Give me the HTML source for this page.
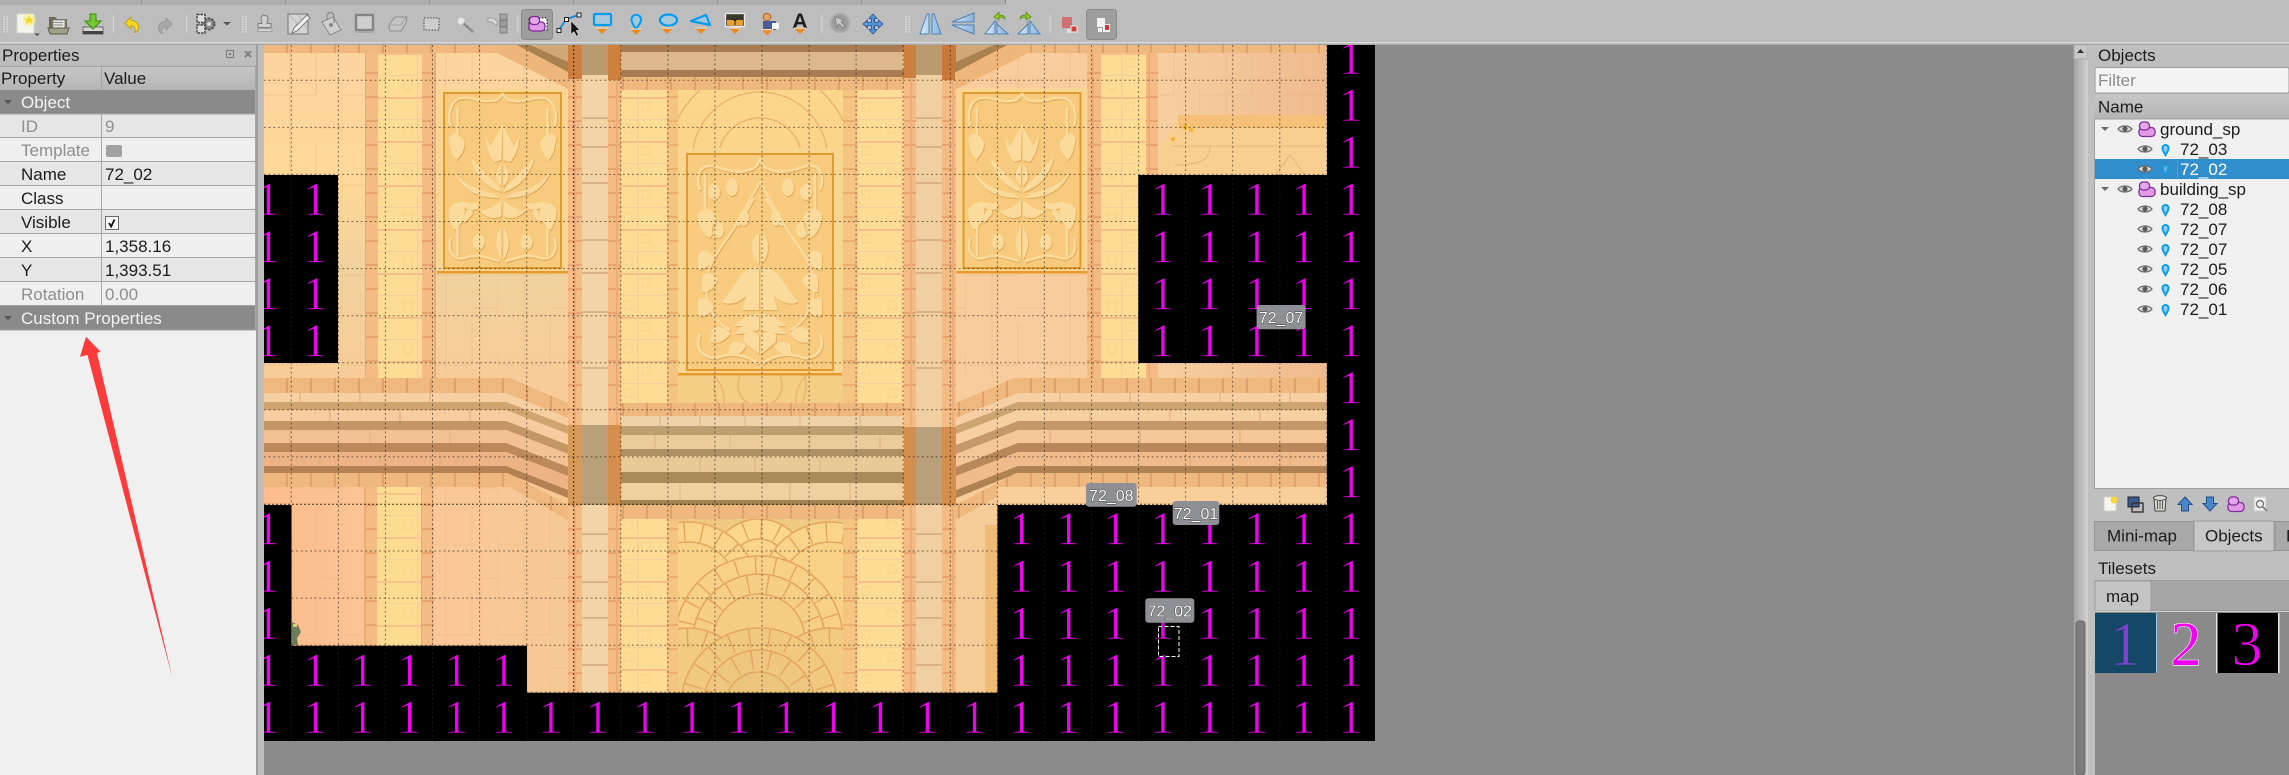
<!DOCTYPE html>
<html><head><meta charset="utf-8"><style>
html,body{margin:0;padding:0;background:#8c8c8c;width:2289px;height:775px;overflow:hidden}
svg{display:block}
.ui{font-family:"Liberation Sans",sans-serif;font-size:16.5px;fill:#1c1c1c}
.dis{fill:#8e8e8e}.wh{fill:#f4f4f4}
.one{font-family:"Liberation Serif",serif;font-size:48px;fill:#f000f0;text-anchor:middle;stroke:#000;stroke-width:.7px}
.bd{font-family:"Liberation Sans",sans-serif;font-size:16px;fill:#fff;text-anchor:middle;paint-order:stroke;stroke:#222;stroke-width:.7px}
</style></head><body>
<svg width="2289" height="775" viewBox="0 0 2289 775" xmlns="http://www.w3.org/2000/svg">
<defs>
<pattern id="win" width="44" height="44" patternUnits="userSpaceOnUse" y="53"><rect width="44" height="44" fill="#fddc94"/><rect y="0" width="44" height="2" fill="#f6bc8c"/><rect y="22" width="44" height="1" fill="#f8cc9c"/><rect x="21" width="1.5" height="44" fill="#f8cc9c"/><path d="M8 28h8v8h-8zM26 6h8v8h-8z" fill="none" stroke="#f8d290"/></pattern>
<pattern id="brk" width="14" height="24" patternUnits="userSpaceOnUse" y="50"><rect width="14" height="24" fill="#f4bc84"/><rect y="22" width="14" height="2" fill="#e8a470"/><rect x="0" width="2" height="24" fill="#ecac76"/></pattern>
<pattern id="brk2" width="14" height="24" patternUnits="userSpaceOnUse" y="50"><rect width="14" height="24" fill="#f5c480"/><rect y="22" width="14" height="2" fill="#ecae6c"/></pattern>
<pattern id="tile" width="24" height="15" patternUnits="userSpaceOnUse"><rect width="24" height="15" fill="#efb87e"/><rect x="22" width="2" height="15" fill="#e0a06c"/></pattern>
<pattern id="wall" width="78" height="90" patternUnits="userSpaceOnUse" x="264" y="53"><path d="M26 0V90M52 0V42M78 30V90M0 42H52M52 75H78" stroke="#e6b484" stroke-opacity=".45" fill="none"/></pattern>
<linearGradient id="wl" x1="0" x2="0" y1="0" y2="1"><stop offset="0" stop-color="#fcd3a0"/><stop offset=".3" stop-color="#fed898"/><stop offset=".5" stop-color="#f0d29c"/><stop offset=".75" stop-color="#f8cc98"/><stop offset="1" stop-color="#fcc898"/></linearGradient>
<linearGradient id="wl2" x1="0" x2="1" y1="0" y2="0"><stop offset="0" stop-color="#fdbc8c"/><stop offset=".5" stop-color="#fbc898"/><stop offset="1" stop-color="#f6c894"/></linearGradient>
<linearGradient id="wr" x1="0" x2="1" y1="0" y2="0"><stop offset="0" stop-color="#f6cfa0"/><stop offset="1" stop-color="#efba8e"/></linearGradient>
<linearGradient id="arc" x1="0" x2="0" y1="0" y2="1"><stop offset="0" stop-color="#fcd68c"/><stop offset="1" stop-color="#ecc67e"/></linearGradient>
<linearGradient id="hd" x1="0" x2="0" y1="0" y2="1"><stop offset="0" stop-color="#c6c6c6"/><stop offset="1" stop-color="#b4b4b4"/></linearGradient>
<linearGradient id="sb" x1="0" x2="1" y1="0" y2="0"><stop offset="0" stop-color="#a4a4a4"/><stop offset="1" stop-color="#d2d2d2"/></linearGradient>
<linearGradient id="fl" x1="0" x2="1" y1="0" y2="0"><stop offset="0" stop-color="#d7e8f8"/><stop offset="1" stop-color="#8ab4dc"/></linearGradient>
<clipPath id="mc"><rect x="264" y="45" width="1111" height="696"/></clipPath>
<clipPath id="ca"><rect x="678" y="88" width="165" height="60"/><rect x="678" y="375" width="165" height="28"/></clipPath>
<clipPath id="cb"><rect x="678" y="519" width="165" height="174"/></clipPath>
<clipPath id="bk"><path id="blk" d="M264 175H338V363H264ZM1138.3 175H1327V363H1138.3ZM1327 45H1375V741H264V505H291.5V645.7H527V692.7H997.5V505H1327Z"/></clipPath>
<g id="orn">
 <path d="M-52 38C-56 24-50 10-40 10C-30 8-22 16-6 12C-3 10-1 8 0 5M-45 20V62M-52 150C-56 165-48 172-38 170C-25 165-15 170-3 173M-45 168V125" fill="none" stroke="currentColor" stroke-width="2.6"/>
 <path d="M-54 50C-48 42-44 46-39 52C-36 58-40 66-46 72C-52 66-52 58-54 50ZM-54 122C-48 112-42 114-38 120C-36 128-42 138-48 142C-52 136-54 130-54 122Z" fill="currentColor"/>
 <path d="M0 36C-5 46-8 52-12 58L-17 48C-16 60-14 66-8 74L-1 72ZM-1 76C-8 84-8 92-1 98ZM-4 98C-18 86-28 72-32 70C-27 88-16 100-1 104ZM-10 105C-30 102-42 92-48 84C-40 102-26 110-3 110ZM-1 113C-9 118-16 124-24 122C-16 130-8 132-1 128ZM-24 114C-32 118-38 112-44 114C-38 122-30 124-24 120ZM-1 138C-7 150-9 156-1 172ZM-30 126C-34 130-36 136-40 134C-38 124-34 120-30 122Z" fill="currentColor"/>
 <path d="M-24 146a6 8 0 1 0 .1 0Z" fill="currentColor"/>
</g>
<g id="pan"><rect x="-65.5" y="0" width="131" height="185" fill="#f8d592"/><rect x="-58.5" y="5" width="117" height="175" fill="#f7ca7e" stroke="#e09a2e" stroke-width="2"/><rect x="-65.5" y="183" width="131" height="2.5" fill="#e69a2c"/>
<g color="#e2ae60" transform="translate(.8 1.2)"><use href="#orn"/><use href="#orn" transform="scale(-1,1)"/></g><g color="#fadb9c"><use href="#orn"/><use href="#orn" transform="scale(-1,1)"/></g></g>
<g id="ocen">
 <path d="M-60 36C-66 18-58 10-46 12C-30 18-18 20-6 14C-3 12-1 8 0 4M-55 20V70M-60 180C-66 196-56 204-44 204C-30 198-14 200-2 210" fill="none" stroke="currentColor" stroke-width="2.8"/>
 <path d="M-62 60C-54 50-48 56-44 62C-42 72-46 78-50 84C-56 82-62 72-62 60ZM-46 30a6 8 0 1 0 .1 0ZM-28 24a6 9 0 1 0 .1 0ZM-16 56a5 8 0 1 0 .1 0ZM-42 68a6 8 0 1 0 .1 0ZM-62 100C-54 94-50 98-46 104C-50 112-56 116-62 116ZM-58 122C-50 116-46 120-42 126C-46 134-50 138-58 138ZM-62 145C-52 142-48 148-46 154C-50 160-56 164-62 162ZM-48 176C-40 170-34 174-30 180C-36 188-42 190-50 188ZM-16 180C-8 176-4 178-1 182V200C-6 196-12 192-16 188ZM-30 190C-24 186-18 188-14 192C-18 200-24 202-32 200Z" fill="currentColor"/>
 <path d="M0 28L-26 74M-26 74C-36 90-46 100-52 118C-58 140-50 166-30 176M-6 44L-22 72" fill="none" stroke="currentColor" stroke-width="2.4"/>
 <path d="M-1 80C-6 80-9 88-8 96C-7 104-4 108-1 110ZM-1 114C-10 112-18 118-22 126L-38 148C-30 152-20 148-14 142L-18 156H-1ZM-1 160C-12 160-20 166-26 172L-18 172L-26 180C-16 180-8 178-1 176Z" fill="currentColor"/>
</g>
<g id="pc"><rect x="-82" y="-6" width="164" height="227" fill="#f9d592"/><rect x="-73" y="0" width="146" height="216" fill="#f8cb7e" stroke="#e09a2e" stroke-width="2"/><rect x="-82" y="219" width="164" height="2.5" fill="#e69a2c"/>
<g color="#e2ae60" transform="translate(.8 1.2)"><use href="#ocen"/><use href="#ocen" transform="scale(-1,1)"/></g><g color="#fadb9c"><use href="#ocen"/><use href="#ocen" transform="scale(-1,1)"/></g></g>
<g id="eye"><path d="M0 5C3 1 11 1 14 5C11 9 3 9 0 5Z" fill="#dcdcdc" stroke="#6a6a6a" stroke-width="1.3"/><circle cx="7" cy="5" r="2.6" fill="#5a5a5a"/></g>
<g id="lay"><rect x="1" y="6.5" width="16" height="9" rx="3.5" fill="#e29ae6" stroke="#7c2c9c" stroke-width="1.3"/><rect x="1.5" y="1" width="10" height="8" rx="3.5" fill="#e6a6ea" stroke="#7c2c9c" stroke-width="1.3"/></g>
<g id="pin"><path d="M4.5 12C2.8 9 1.5 7.5 1.5 5A3 3 0 0 1 7.5 5C7.5 7.5 6.2 9 4.5 12Z" fill="#8fd0f0" stroke="#0a9cec" stroke-width="2"/></g>
<g id="tri"><path d="M-5 0H5L0 5Z" fill="#f08a1e"/><path d="M-6-1H6" stroke="#f6d8a8" stroke-width="1"/></g>
<g id="dots"><path d="M0 0V17M3 0V17" stroke="#d6d6d6" stroke-width="2" stroke-dasharray="1.5 1"/></g>
</defs>

<rect width="2289" height="775" fill="#8c8c8c"/>

<!-- MAP -->
<g clip-path="url(#mc)">
<rect x="264" y="45" width="310" height="448" fill="url(#wl)"/>
<rect x="264" y="487" width="304" height="206" fill="url(#wl2)"/>
<rect x="264" y="53" width="101" height="320" fill="url(#wall)"/>
<rect x="436" y="53" width="132" height="320" fill="url(#wall)"/>
<rect x="291" y="487" width="277" height="206" fill="url(#wall)"/>
<rect x="365" y="53" width="13" height="325" fill="url(#brk)"/><rect x="378" y="53" width="44" height="325" fill="url(#win)"/><rect x="422" y="53" width="14" height="325" fill="url(#brk)"/>
<rect x="364" y="487" width="13" height="160" fill="url(#brk)"/><rect x="377" y="487" width="44" height="160" fill="#fddc8c"/><rect x="377" y="487" width="44" height="160" fill="url(#win)" opacity=".8"/><rect x="421" y="487" width="13" height="160" fill="url(#brk)"/>
<rect x="568" y="45" width="14" height="648" fill="url(#brk)"/>
<rect x="582" y="45" width="26" height="648" fill="#f2d4a6"/>
<path d="M582 118H608M582 147H608M582 183H608M582 240H608M582 273H608M582 312H608M582 368H608M582 534H608M582 582H608M582 618H608M582 665H608" stroke="#cfa87a" stroke-width="1.4"/>
<rect x="608" y="45" width="13" height="648" fill="url(#brk)"/>
<rect x="621" y="88" width="46" height="605" fill="url(#win)"/>
<rect x="667" y="88" width="11" height="605" fill="url(#brk2)"/>
<rect x="678" y="88" width="165" height="605" fill="url(#arc)"/>
<rect x="843" y="88" width="14" height="605" fill="url(#brk2)"/>
<rect x="857" y="88" width="47" height="605" fill="url(#win)"/>
<rect x="904" y="45" width="12" height="648" fill="url(#brk)"/>
<rect x="916" y="45" width="26" height="648" fill="#f0d0a2"/>
<path d="M916 118H942M916 147H942M916 183H942M916 240H942M916 273H942M916 312H942M916 368H942M916 534H942M916 582H942M916 618H942M916 665H942" stroke="#cfa87a" stroke-width="1.4"/>
<rect x="942" y="45" width="14" height="648" fill="url(#brk)"/>
<rect x="956" y="53" width="372" height="452" fill="#f8cc9c"/><rect x="956" y="53" width="131" height="325" fill="url(#wall)"/>
<rect x="1087" y="53" width="14" height="325" fill="url(#brk)"/><rect x="1101" y="53" width="45" height="325" fill="url(#win)"/><rect x="1146" y="53" width="12" height="325" fill="url(#brk)"/>
<rect x="1158" y="53" width="170" height="325" fill="url(#wr)"/><rect x="1158" y="53" width="170" height="70" fill="url(#wall)"/>
<rect x="956" y="487" width="42" height="206" fill="#f6cc98"/><rect x="985" y="525" width="13" height="170" fill="#f0bc74"/>
<!-- arcs -->
<g clip-path="url(#ca)" fill="none" stroke="#eab46c" stroke-width="1.4">
<circle cx="760" cy="160" r="42"/><circle cx="760" cy="160" r="68"/><circle cx="760" cy="160" r="92"/>
<circle cx="760" cy="385" r="22"/><circle cx="760" cy="385" r="46"/><circle cx="690" cy="400" r="34"/><circle cx="830" cy="400" r="34"/>
</g>
<g clip-path="url(#cb)" stroke="#e4a65e" stroke-width="1.5">
<circle cx="759" cy="567" r="48" fill="#fcd88e"/><circle cx="759" cy="567" r="38" fill="none" stroke-width="18" stroke-dasharray="1.4 15"/><circle cx="759" cy="567" r="28" fill="#fad48a"/>
<circle cx="688" cy="592" r="70" fill="#fad48a"/><circle cx="688" cy="592" r="60" fill="none" stroke-width="18" stroke-dasharray="1.4 16"/><circle cx="688" cy="592" r="50" fill="#f9d288"/>
<circle cx="830" cy="592" r="70" fill="#fad48a"/><circle cx="830" cy="592" r="60" fill="none" stroke-width="18" stroke-dasharray="1.4 16"/><circle cx="830" cy="592" r="50" fill="#f9d288"/>
<circle cx="759" cy="640" r="84" fill="#f8d088"/><circle cx="759" cy="640" r="75" fill="none" stroke-width="16" stroke-dasharray="1.4 18"/><circle cx="759" cy="640" r="66" fill="#f6ce86"/><circle cx="759" cy="640" r="56" fill="none" stroke-width="18" stroke-dasharray="1.4 18"/><circle cx="759" cy="640" r="46" fill="#f5cc84"/>
<circle cx="688" cy="690" r="62" fill="#f2ca82"/><circle cx="688" cy="690" r="52" fill="none" stroke-width="18" stroke-dasharray="1.4 16"/>
<circle cx="830" cy="690" r="62" fill="#f2ca82"/><circle cx="830" cy="690" r="52" fill="none" stroke-width="18" stroke-dasharray="1.4 16"/>
<circle cx="759" cy="706" r="78" fill="#f0c880"/><circle cx="759" cy="706" r="68" fill="none" stroke-width="18" stroke-dasharray="1.4 18"/><circle cx="759" cy="706" r="56" fill="#efc680"/><circle cx="759" cy="706" r="46" fill="none" stroke-width="18" stroke-dasharray="1.4 16"/><circle cx="759" cy="706" r="34" fill="#edc47e"/>
</g>
<use href="#pan" x="502.5" y="88"/><use href="#pan" x="1022" y="88"/>
<use href="#pc" x="760" y="154"/>
<!-- roof top -->
<rect x="264" y="45" width="240" height="8" fill="url(#tile)"/>
<polygon points="497,45 517,45 570,72 570,90 497,53" fill="#efb67c"/>
<polygon points="517,45 568,45 568,72" fill="#a8814f"/>
<polygon points="530,45 568,45 568,62" fill="#d0a878"/>
<rect x="568" y="45" width="14" height="34" fill="#cc7f3e"/><rect x="608" y="45" width="13" height="35" fill="#cf803c"/><rect x="582" y="45" width="26" height="30" fill="#bb9a70"/>
<rect x="621" y="45" width="283" height="33" fill="#a87c50"/><rect x="621" y="52" width="283" height="18" fill="#dcb88c"/>
<rect x="621" y="77" width="283" height="13" fill="url(#tile)"/>
<rect x="904" y="45" width="12" height="33" fill="#cc7f3e"/><rect x="942" y="45" width="14" height="35" fill="#c87838"/><rect x="916" y="45" width="26" height="30" fill="#bb9a70"/>
<polygon points="1028,45 1007,45 955,72 955,90 1028,53" fill="#efb67c"/>
<polygon points="1007,45 956,45 956,72" fill="#a8814f"/>
<polygon points="994,45 956,45 956,62" fill="#d0a878"/>
<rect x="1028" y="45" width="300" height="8" fill="url(#tile)"/>
<path d="M1160 175V144C1170 135 1175 125 1178 115H1328V175Z" fill="#f8cf90"/><rect x="1178" y="115" width="150" height="13" fill="#f6c078"/><path d="M1172 146H1328M1210 146C1210 160 1200 165 1175 165M1275 175L1290 155L1305 175" fill="none" stroke="#e8b478"/>
<circle cx="1185" cy="127" r="2.5" fill="#f4b824"/><circle cx="1191" cy="130" r="2" fill="#f4b824"/><circle cx="1173" cy="139" r="2" fill="#f4b824"/>
<!-- centre bands -->
<rect x="621" y="403" width="283" height="14" fill="url(#tile)"/>
<rect x="621" y="416" width="283" height="10" fill="#eed2a8"/><rect x="621" y="426" width="283" height="9" fill="#bd9f70"/>
<rect x="621" y="435" width="283" height="14" fill="#ebcb9a"/><rect x="621" y="449" width="283" height="7" fill="#ad9064"/>
<rect x="621" y="456" width="283" height="16" fill="#e9c998"/><rect x="621" y="472" width="283" height="11" fill="#ab8a5a"/>
<rect x="621" y="483" width="283" height="17" fill="#f0cfa0"/><rect x="621" y="500" width="283" height="5" fill="#a58454"/>
<rect x="621" y="505" width="283" height="14" fill="url(#tile)"/>
<path d="M660 416V426M700 416V426M745 416V426M800 416V426M860 416V426M655 435V449M730 435V449M810 435V449M880 435V449M700 456V472M755 456V472M820 456V472M680 483V500M790 483V500M850 483V500" stroke="#d8b484"/>
<rect x="582" y="425" width="26" height="80" fill="#b9a07a"/><rect x="916" y="427" width="26" height="78" fill="#b9a07a"/>
<rect x="568" y="425" width="14" height="80" fill="#d89a58"/><rect x="608" y="425" width="13" height="80" fill="#d48e4e"/><rect x="904" y="427" width="12" height="78" fill="#d48e4e"/><rect x="942" y="427" width="14" height="78" fill="#d48e4e"/>
<!-- left slanted bands -->
<polygon points="264,378 510,378 568,403 568,430 506,393 264,393" fill="url(#tile)"/>
<polygon points="264,393 506,393 568,418 568,427 506,402 264,402" fill="#f6cfa2"/>
<polygon points="264,402 506,402 568,426 568,434 506,410 264,410" fill="#cfa46e"/>
<polygon points="264,410 506,410 568,434 568,445 506,421 264,421" fill="#f6cca0"/>
<polygon points="264,421 506,421 568,445 568,454 506,430 264,430" fill="#c49666"/>
<polygon points="264,430 506,430 568,454 568,467 506,443 264,443" fill="#f3c294"/>
<polygon points="264,443 506,443 568,467 568,476 506,452 264,452" fill="#bd885a"/>
<polygon points="264,452 506,452 568,476 568,490 506,466 264,466" fill="#eeb384"/>
<polygon points="264,466 506,466 568,490 568,498 506,473 264,473" fill="#b48252"/>
<polygon points="264,473 508,473 568,505 568,520 510,487 264,487" fill="url(#tile)"/>
<path d="M300 393V402M360 393V402M430 393V402M330 410V421M400 410V421M470 410V421M290 430V443M370 430V443M450 430V443M320 452V466M380 452V466M440 452V466" stroke="#e0aa78"/>
<!-- right slanted bands -->
<polygon points="1328,378 1014,378 956,403 956,430 1018,393 1328,393" fill="url(#tile)"/>
<polygon points="1328,393 1018,393 956,418 956,427 1018,402 1328,402" fill="#f6d0a4"/>
<polygon points="1328,402 1018,402 956,426 956,434 1018,410 1328,410" fill="#cca470"/>
<polygon points="1328,410 1018,410 956,434 956,445 1018,421 1328,421" fill="#f6cfa2"/>
<polygon points="1328,421 1018,421 956,445 956,454 1018,430 1328,430" fill="#c49868"/>
<polygon points="1328,430 1018,430 956,454 956,467 1018,443 1328,443" fill="#f4c698"/>
<polygon points="1328,443 1018,443 956,467 956,476 1018,452 1328,452" fill="#b8885a"/>
<polygon points="1328,452 1018,452 956,476 956,490 1018,466 1328,466" fill="#f0bb8a"/>
<polygon points="1328,466 1018,466 956,490 956,498 1018,473 1328,473" fill="#b08252"/>
<polygon points="1328,473 1016,473 956,505 956,520 1014,487 1328,487" fill="url(#tile)"/>
<path d="M1060 393V402M1130 393V402M1220 393V402M1290 393V402M1090 410V421M1170 410V421M1260 410V421M1050 430V443M1140 430V443M1240 430V443M1080 452V466M1190 452V466M1290 452V466" stroke="#e0aa78"/>
<rect x="997" y="487" width="331" height="18" fill="#f8cf98"/>
<path d="M292 622L298 625L301 632L297 638L298 645H292Z" fill="#6c7c58"/><path d="M293 624h4v3h-4z" fill="#e8d070"/>
<!-- grid -->
<g id="gd" stroke="#1c120a" stroke-width="1" stroke-dasharray="2 2.6" fill="none" opacity=".55">
<path d="M291.3 45V741M338.4 45V741M385.4 45V741M432.5 45V741M479.6 45V741M526.7 45V741M620.8 45V741M667.9 45V741M714.9 45V741M762 45V741M809.1 45V741M856.1 45V741M903.2 45V741M950.3 45V741M997.4 45V741M1044.4 45V741M1091.5 45V741M1138.6 45V741M1185.6 45V741M1232.7 45V741M1279.8 45V741M1326.8 45V741"/>
<path d="M264 80.3H1375M264 127.4H1375M264 174.4H1375M264 221.5H1375M264 268.6H1375M264 315.7H1375M264 362.7H1375M264 409.8H1375M264 456.9H1375M264 551H1375M264 598.1H1375M264 645.2H1375M264 692.2H1375"/>
</g>
<path d="M573.7 45V741M264 504.3H1375" stroke="#000" stroke-width="1" stroke-dasharray="2 2" opacity=".75"/>
<use href="#blk" fill="#000"/>
<g clip-path="url(#bk)"><path d="M291.3 45V741M338.4 45V741M385.4 45V741M432.5 45V741M479.6 45V741M526.7 45V741M573.7 45V741M620.8 45V741M667.9 45V741M714.9 45V741M762 45V741M809.1 45V741M856.1 45V741M903.2 45V741M950.3 45V741M997.4 45V741M1044.4 45V741M1091.5 45V741M1138.6 45V741M1185.6 45V741M1232.7 45V741M1279.8 45V741M1326.8 45V741" stroke="#161616" stroke-dasharray="2 2.6"/></g>
<g class="one">
<text y="74" x="1350.5">1</text>
<text y="121.1" x="1350.5">1</text>
<text y="168.1" x="1350.5">1</text>
<text y="215.2" x="267.8 314.9 1162.2 1209.2 1256.3 1303.4 1350.5">1111111</text>
<text y="262.3" x="267.8 314.9 1162.2 1209.2 1256.3 1303.4 1350.5">1111111</text>
<text y="309.4" x="267.8 314.9 1162.2 1209.2 1256.3 1303.4 1350.5">1111111</text>
<text y="356.4" x="267.8 314.9 1162.2 1209.2 1256.3 1303.4 1350.5">1111111</text>
<text y="403.5" x="1350.5">1</text>
<text y="450.6" x="1350.5">1</text>
<text y="497.6" x="1350.5">1</text>
<text y="544.7" x="267.8 1021 1068 1115 1162.2 1209.2 1256.3 1303.4 1350.5">111111111</text>
<text y="591.8" x="267.8 1021 1068 1115 1162.2 1209.2 1256.3 1303.4 1350.5">111111111</text>
<text y="638.8" x="267.8 1021 1068 1115 1162.2 1209.2 1256.3 1303.4 1350.5">111111111</text>
<text y="685.9" x="267.8 314.9 362 409 456 503.2 1021 1068 1115 1162.2 1209.2 1256.3 1303.4 1350.5">11111111111111</text>
<text y="733" x="267.8 314.9 362 409 456 503.2 550.2 597.3 644.4 691.4 738.5 785.6 832.7 879.7 926.8 973.9 1021 1068 1115 1162.2 1209.2 1256.3 1303.4 1350.5">111111111111111111111111</text>
</g>
<rect x="1256.6" y="305" width="49" height="24.3" rx="3" fill="#8f9096"/><text class="bd" x="1281" y="323">72_07</text>
<rect x="1086" y="483" width="50.7" height="23.7" rx="3" fill="#8f9096"/><text class="bd" x="1111.3" y="501">72_08</text>
<rect x="1172.7" y="501" width="46.6" height="24" rx="3" fill="#8f9096"/><text class="bd" x="1196" y="519">72_01</text>
<rect x="1145.3" y="598.3" width="49" height="24.4" rx="3" fill="#8f9096"/><text class="bd" x="1169.8" y="616.5">72_02</text>
<rect x="1158.5" y="626.5" width="20.5" height="30" fill="none" stroke="#000"/><rect x="1158.5" y="626.5" width="20.5" height="30" fill="none" stroke="#fff" stroke-dasharray="4 2"/>
</g>

<!-- TOOLBAR -->
<rect x="0" y="0" width="2289" height="43" fill="#bdbdbd"/>
<rect x="0" y="0" width="1005" height="4" fill="#b0b0b0"/><rect x="0" y="3.5" width="1005" height="1" fill="#a6a6a6"/>
<path d="M141.5 0V4M285.5 0V4M429.5 0V4M573.5 0V4M717.5 0V4M861.5 0V4M1005.5 0V4" stroke="#8e8e8e"/>
<rect x="0" y="42" width="2289" height="1.5" fill="#dadada"/><rect x="0" y="43.5" width="2289" height="1.5" fill="#a8a8a8"/>
<use href="#dots" x="4" y="16"/>
<rect x="17" y="14" width="17" height="19" fill="#f4f4ee" stroke="#d8d8d0"/><circle cx="29" cy="20" r="6.5" fill="#f8f0a0" opacity=".8"/><path d="M29 15.5l1.4 3 3.2.3-2.4 2.1.7 3.1-2.9-1.7-2.9 1.7.7-3.1-2.4-2.1 3.2-.3z" fill="#f8d820"/><path d="M34 33.5h6l-3 2.5z" fill="#555"/>
<path d="M49 33V17h6l2 2h10v14Z" fill="#6c6c54"/><rect x="53" y="20" width="12" height="9" fill="#e8e8e0" stroke="#888"/><path d="M54 22.5h9M54 25h9" stroke="#888"/><path d="M48 28h21l-2 6H50Z" fill="#a0a088" stroke="#5c5c48"/>
<path d="M83 27h20v7H83Z" fill="#d8d8d0" stroke="#666"/><rect x="83" y="31" width="20" height="3" fill="#444"/><path d="M90 14h6v7h5l-8 8-8-8h5Z" fill="#72c830" stroke="#3e8c14"/>
<path d="M113.5 15V33M186.5 15V33" stroke="#d4d4d4" stroke-width="1.2"/>
<path d="M125 23l6-6v3.5c5 0 7.5 3 7.5 6.5s-2 5-4 5.5c1.2-2 1.5-6.5-3.5-7v3.5Z" fill="#f6d820" stroke="#b89410" stroke-width=".8"/>
<path d="M172 24l-6-6v3.5c-5 0-7.5 3-7.5 6.5s2 5 4 5.5c-1.2-2-1.5-6.5 3.5-7v3.5Z" fill="#a8a8a8" stroke="#939393" stroke-width=".8"/>
<circle cx="209" cy="24" r="5.5" fill="#8c8c8c" stroke="#555" stroke-width="2" stroke-dasharray="2.5 1"/><circle cx="209" cy="24" r="2" fill="#ddd"/>
<rect x="197" y="14.5" width="8" height="8" fill="#ddd" stroke="#444" stroke-width="1.4" stroke-dasharray="2.5 1"/><rect x="197" y="25" width="8" height="8" fill="#ddd" stroke="#444" stroke-width="1.4" stroke-dasharray="2.5 1"/>
<path d="M223 22h8l-4 3.5z" fill="#555"/>
<use href="#dots" x="243" y="16"/>
<path d="M265 15.5a3 3 0 0 1 3 3c0 2-1.2 2.6-1 5h4v4h-13v-4h4c.2-2.4-1-3-1-5a3 3 0 0 1 4-3Z" fill="#cfcfcf" stroke="#7e7e7e"/><rect x="258" y="29" width="14" height="2.5" fill="#e0e0e0" stroke="#8a8a8a" stroke-width=".7"/>
<rect x="288" y="14" width="20" height="20" fill="#d4d4d4" stroke="#8c8c8c" stroke-width="1.4"/><path d="M289 15l8 8-4 10M298 15l9 14" stroke="#b4b4b4" fill="none"/><path d="M292 33l2-5 13-13 3 3-13 13Z" fill="#f0f0f0" stroke="#7c7c7c"/>
<path d="M322 22l11-5 8 13-11 5Z" fill="#cfcfcf" stroke="#8a8a8a"/><path d="M327 20v-4a3.5 3.5 0 0 1 7 0v7" fill="none" stroke="#8a8a8a" stroke-width="1.2"/><circle cx="331" cy="25" r="2" fill="#888"/>
<rect x="356" y="15" width="17" height="15" fill="#cfcfcf" stroke="#848484" stroke-width="2.4"/><rect x="356" y="31" width="17" height="2" fill="#a6a6a6"/>
<path d="M389 25l6-8h12l-1 6-5 8h-11Z" fill="#c4c4c4" stroke="#8e8e8e"/><path d="M389 25h12l5-8" fill="none" stroke="#a2a2a2"/>
<rect x="424" y="18" width="15" height="12" fill="#cdcdcd" stroke="#444" stroke-dasharray="1.5 1.5"/>
<path d="M462 22l11 10" stroke="#8e8e8e" stroke-width="2.6"/><circle cx="461" cy="21" r="3.5" fill="#ececec" opacity=".85"/>
<rect x="500" y="14" width="7" height="6" fill="#a4a4a4" stroke="#7e7e7e"/><rect x="500" y="20.5" width="7" height="6" fill="#9a9a9a" stroke="#7e7e7e"/><rect x="500" y="27" width="7" height="6" fill="#a4a4a4" stroke="#7e7e7e"/><path d="M488 18h5l5 4-2 4-4-4h-4Z" fill="#d8d8d8" stroke="#9c9c9c"/>
<path d="M518 15V33" stroke="#d4d4d4" stroke-width="1.2"/>
<rect x="521.5" y="9.5" width="31" height="30" rx="3" fill="#9e9e9e" stroke="#8a8a8a"/>
<rect x="529" y="18" width="18" height="12" fill="#fff" stroke="#111" stroke-dasharray="1.6 1.6"/>
<use href="#lay" x="528" y="15.5"/>
<path d="M559 30L566 19.5 578 15" fill="none" stroke="#0a8ce0" stroke-width="1.8"/><rect x="557" y="28.5" width="4" height="4" fill="#eee" stroke="#222"/><rect x="564.5" y="17.5" width="4" height="4" fill="#eee" stroke="#222"/><rect x="577" y="13" width="4" height="4" fill="#eee" stroke="#222"/>
<path d="M571 21V34L574 31.5 576.5 36 578.5 35 576 30.5 579.5 30Z" fill="#111" stroke="#ddd" stroke-width=".5"/>
<rect x="594" y="14" width="17" height="11" rx="1" fill="#a6c8dc" stroke="#049cf0" stroke-width="2.2"/><use href="#tri" x="602" y="29"/>
<path d="M636 29C633 25 631.5 22.5 631.5 19.5A4.6 4.6 0 0 1 641 19.5C641 22.5 639 25 636 29Z" fill="#a6c8dc" stroke="#049cf0" stroke-width="2"/><use href="#tri" x="636" y="30"/>
<ellipse cx="668.5" cy="20" rx="8.5" ry="5.5" fill="#a6c8dc" stroke="#049cf0" stroke-width="2.2"/><use href="#tri" x="667" y="29"/>
<path d="M691 21L706 15 710 25Z" fill="#a6c8dc" stroke="#049cf0" stroke-width="2.2" stroke-linejoin="round"/><use href="#tri" x="701" y="29"/>
<rect x="725.5" y="13.5" width="19" height="13" fill="#3a3a2c" stroke="#e8e8e8" stroke-width="1.4"/><rect x="727" y="20" width="16" height="5.5" fill="#e8a030"/><path d="M735 25V19M735 21l-3-3M735 21l3-3" stroke="#222"/><use href="#tri" x="735" y="29"/>
<rect x="763" y="21" width="13" height="9" fill="#4a5c96"/><circle cx="767" cy="17" r="3.8" fill="#e8a060" stroke="#a06a30"/><path d="M772 23h7v6h-7Z" fill="#f4f4f4"/><use href="#tri" x="767" y="30.5"/>
<text x="800" y="28" font-family="Liberation Sans,sans-serif" font-weight="700" font-size="21" text-anchor="middle" fill="#1c1c1c">A</text><use href="#tri" x="800" y="29"/>
<path d="M822 15V33" stroke="#d4d4d4" stroke-width="1.2"/>
<circle cx="840" cy="23" r="9" fill="#9c9c9c" stroke="#a8a8a8" stroke-width="2"/><path d="M835 17l9 3-3 2 4 4-2 2-4-4-2 3Z" fill="#cdcdcd" stroke="#848484"/>
<path d="M873 14l4 4.5h-2.4v3.9h3.9V20l4.5 4-4.5 4v-2.4h-3.9v3.9H877L873 34l-4-4.5h2.400v-3.900h-3.900V28l-4.500-4 4.500-4v2.400h3.900V18.500H869Z" fill="#5a92d8" stroke="#26538f" stroke-width=".8"/>
<use href="#dots" x="906" y="16"/>
<path d="M927 14L920 34H929V14ZM934 14L941 34H932V14Z" fill="url(#fl)" stroke="#4c82b8"/>
<path d="M974 13L952 22H974ZM974 34L952 25H974Z" fill="url(#fl)" stroke="#4c82b8"/>
<path d="M995 21L985 34H995ZM997 21V34H1008L997 24Z" fill="url(#fl)" stroke="#4c82b8"/><path d="M994 17l5-5v3c4 0 6 1 6 4-1-1.500-3-2-6-2v3Z" fill="#90c820" stroke="#4e8a10" stroke-width=".7"/>
<path d="M1030 21L1040 34H1030ZM1028 21V34H1018L1028 24Z" fill="url(#fl)" stroke="#4c82b8"/><path d="M1031 17l-5-5v3c-4 0-6 1-6 4 1-1.500 3-2 6-2v3Z" fill="#90c820" stroke="#4e8a10" stroke-width=".7"/>
<path d="M1050 15V33" stroke="#d4d4d4" stroke-width="1.2"/>
<rect x="1062" y="17" width="10" height="11" fill="#d07070"/><rect x="1071" y="26" width="6" height="6" fill="#d04040" stroke="#eee"/><rect x="1067" y="29" width="4" height="4" fill="#e0e0e0"/>
<rect x="1086.5" y="9.5" width="30" height="30" rx="3" fill="#9e9e9e" stroke="#8a8a8a"/>
<rect x="1097" y="18" width="8" height="9" fill="#f2f2f2"/><rect x="1103" y="24" width="7" height="8" fill="#f2f2f2"/><rect x="1105" y="25" width="4" height="5" fill="#d03838"/><rect x="1098" y="28" width="4" height="4" fill="#f2f2f2"/>

<!-- LEFT DOCK -->
<rect x="0" y="45" width="264" height="730" fill="#bdbdbd"/>
<rect x="256" y="45" width="2" height="730" fill="#9e9e9e"/>
<rect x="0" y="330" width="256" height="445" fill="#f0f0f0"/>
<text class="ui" x="2" y="61" style="font-size:17px">Properties</text>
<rect x="226.500" y="50.500" width="7" height="7" fill="none" stroke="#7c7c7c"/><rect x="229" y="53" width="2" height="2" fill="#7c7c7c"/><path d="M245 51l6 6M251 51l-6 6" stroke="#7c7c7c" stroke-width="1.8"/>
<rect x="0" y="67" width="256" height="23" fill="url(#hd)"/>
<rect x="0" y="114" width="256" height="24" fill="#e6e6e6"/><rect x="0" y="138" width="256" height="24" fill="#efefef"/><rect x="0" y="162" width="256" height="24" fill="#e6e6e6"/><rect x="0" y="186" width="256" height="24" fill="#efefef"/><rect x="0" y="210" width="256" height="24" fill="#e6e6e6"/><rect x="0" y="234" width="256" height="24" fill="#efefef"/><rect x="0" y="258" width="256" height="24" fill="#e6e6e6"/><rect x="0" y="282" width="256" height="24" fill="#efefef"/>
<rect x="0" y="90" width="256" height="24" fill="#8a8a8a"/><rect x="0" y="306" width="256" height="24" fill="#8a8a8a"/>
<path d="M0 66.500H256M0 137.500H256M0 161.500H256M0 185.500H256M0 209.500H256M0 233.500H256M0 257.500H256M0 281.500H256M0 114H256M0 305.500H256M0 330H256M255.500 66V330" stroke="#a6a6a6" fill="none"/>
<path d="M101.500 67V90M101.500 114V306" stroke="#a6a6a6"/>
<path d="M4 100h8l-4 4.500zM4 316h8l-4 4.500z" fill="#565656"/>
<text class="ui" x="1" y="84" style="font-size:17px">Property</text><text class="ui" x="104" y="84" style="font-size:17px">Value</text>
<text class="ui wh" x="21" y="108" style="font-size:17px">Object</text>
<text class="ui dis" x="21" y="132" style="font-size:17px">ID</text><text class="ui dis" x="105" y="132" style="font-size:17px">9</text>
<text class="ui dis" x="21" y="156" style="font-size:17px">Template</text><rect x="106" y="145" width="16" height="12" rx="2" fill="#a2a2a2"/>
<text class="ui" x="21" y="180" style="font-size:17px">Name</text><text class="ui" x="105" y="180" style="font-size:17px">72_02</text>
<text class="ui" x="21" y="204" style="font-size:17px">Class</text>
<text class="ui" x="21" y="228" style="font-size:17px">Visible</text>
<text class="ui" x="21" y="252" style="font-size:17px">X</text><text class="ui" x="105" y="252" style="font-size:17px">1,358.16</text>
<text class="ui" x="21" y="276" style="font-size:17px">Y</text><text class="ui" x="105" y="276" style="font-size:17px">1,393.51</text>
<text class="ui dis" x="21" y="300" style="font-size:17px">Rotation</text><text class="ui dis" x="105" y="300" style="font-size:17px">0.00</text>
<text class="ui wh" x="21" y="324" style="font-size:17px">Custom Properties</text>
<rect x="105.500" y="216.500" width="13" height="13" fill="#f6f6f6" stroke="#6a6a6a"/><path d="M109 223l2.200 3.500 3.300-7" fill="none" stroke="#111" stroke-width="1.8"/>
<path d="M260.500 657V675" stroke="#dcdcdc" stroke-dasharray="1.5 1.5"/>
<polygon points="86,336.700 100.700,351.700 97,353 172.500,678.500 87.500,355 80,356.700" fill="#ff3a3a"/>

<!-- RIGHT -->
<rect x="2060" y="45" width="14" height="730" fill="#8c8c8c"/>
<rect x="2074" y="45" width="14" height="730" fill="url(#sb)"/>
<rect x="2074" y="45" width="14" height="14" fill="#c8c8c8" stroke="#a8a8a8"/><path d="M2077 53h7l-3.500-4z" fill="#333"/>
<rect x="2076" y="621" width="9" height="154" rx="3" fill="#7c7c7c" stroke="#6a6a6a"/>
<rect x="2088" y="45" width="201" height="730" fill="#bfbfbf"/>
<text class="ui" x="2098" y="61" style="font-size:17px">Objects</text>
<rect x="2095" y="67.500" width="194" height="25.500" rx="2" fill="#f4f4f4" stroke="#9c9c9c"/>
<text class="ui" x="2098" y="86" style="font-size:17px;fill:#8c8c8c">Filter</text>
<rect x="2095" y="95" width="194" height="24" fill="url(#hd)"/><text class="ui" x="2098" y="112.500" style="font-size:17px">Name</text>
<rect x="2095" y="119" width="194" height="369" fill="#f0f0f0"/><path d="M2094.500 119V488.500H2289" stroke="#9e9e9e" fill="none"/><path d="M2095 119H2289" stroke="#9e9e9e"/>
<rect x="2095" y="159" width="194" height="20" fill="#2f8ecb"/>
<path d="M2101 127h8l-4 4zM2101 187h8l-4 4z" fill="#6a6a6a"/>
<use href="#eye" x="2118" y="124"/><use href="#lay" x="2138" y="121"/><text class="ui" x="2160" y="135" style="font-size:17px">ground_sp</text>
<use href="#eye" x="2138" y="144"/><use href="#pin" x="2161" y="143"/><text class="ui" x="2180" y="155" style="font-size:17px">72_03</text>
<use href="#eye" x="2138" y="164"/><use href="#pin" x="2161" y="163" opacity=".5"/><path d="M2177.500 160V178" stroke="#4aa0d8"/><text class="ui" x="2180" y="175" style="font-size:17px;fill:#fff">72_02</text>
<use href="#eye" x="2118" y="184"/><use href="#lay" x="2138" y="181"/><text class="ui" x="2160" y="195" style="font-size:17px">building_sp</text>
<use href="#eye" x="2138" y="204"/><use href="#pin" x="2161" y="203"/><text class="ui" x="2180" y="215" style="font-size:17px">72_08</text>
<use href="#eye" x="2138" y="224"/><use href="#pin" x="2161" y="223"/><text class="ui" x="2180" y="235" style="font-size:17px">72_07</text>
<use href="#eye" x="2138" y="244"/><use href="#pin" x="2161" y="243"/><text class="ui" x="2180" y="255" style="font-size:17px">72_07</text>
<use href="#eye" x="2138" y="264"/><use href="#pin" x="2161" y="263"/><text class="ui" x="2180" y="275" style="font-size:17px">72_05</text>
<use href="#eye" x="2138" y="284"/><use href="#pin" x="2161" y="283"/><text class="ui" x="2180" y="295" style="font-size:17px">72_06</text>
<use href="#eye" x="2138" y="304"/><use href="#pin" x="2161" y="303"/><text class="ui" x="2180" y="315" style="font-size:17px">72_01</text>
<rect x="2104" y="497" width="12" height="14" fill="#f6f6f0" stroke="#d0d0c8"/><circle cx="2114" cy="500" r="3.500" fill="#f8d838"/>
<rect x="2128" y="497" width="11" height="10" fill="#3c5c94" stroke="#222"/><rect x="2132" y="503" width="11" height="9" fill="none" stroke="#333" stroke-width="1.4"/>
<path d="M2154 498h12l-1 13h-10Z" fill="#d8d8d0" stroke="#444"/><ellipse cx="2160" cy="498" rx="6.500" ry="2.400" fill="#ddd" stroke="#444"/><path d="M2157.500 501v8M2160 501v8M2162.500 501v8" stroke="#555"/>
<path d="M2185 497l7 7.500h-3.500V511h-7v-6.500H2178Z" fill="#4a86c8" stroke="#1f4f8a"/>
<path d="M2210 511l7-7.500h-3.500V497h-7v6.500H2203Z" fill="#4a86c8" stroke="#1f4f8a"/>
<use href="#lay" x="2227" y="496"/>
<rect x="2254" y="497" width="12" height="14" fill="#efefef" stroke="#c8c8c8"/><circle cx="2260" cy="504" r="3.500" fill="none" stroke="#777" stroke-width="1.4"/><path d="M2263 507l4 4" stroke="#777" stroke-width="1.6"/>
<rect x="2094.500" y="521.500" width="99" height="29" fill="#a8a8a8" stroke="#949494"/><rect x="2194" y="521" width="80" height="30" fill="#c6c6c6" stroke="#9c9c9c"/><rect x="2275" y="521.500" width="20" height="29" fill="#a8a8a8" stroke="#949494"/>
<text class="ui" x="2107" y="541.500" style="font-size:17px">Mini-map</text><text class="ui" x="2205" y="541.500" style="font-size:17px">Objects</text><text class="ui" x="2286" y="541.500" style="font-size:17px">L</text>
<text class="ui" x="2098" y="574" style="font-size:17px">Tilesets</text>
<rect x="2095" y="581" width="194" height="30" fill="#a6a6a6"/><path d="M2095 580.500H2289M2095 610.500H2289" stroke="#9a9a9a"/>
<rect x="2095" y="581" width="56" height="30" fill="#c4c4c4" stroke="#9c9c9c"/><text class="ui" x="2106" y="602" style="font-size:17px">map</text>
<rect x="2095" y="612" width="194" height="163" fill="#8a8a8a"/>
<path d="M2095 611.500H2289" stroke="#d0d0d0"/>
<rect x="2095" y="613" width="61" height="60" fill="#154866"/><rect x="2156" y="613" width="1" height="60" fill="#9cc8e8"/>
<rect x="2216" y="613" width="1.500" height="60" fill="#e6e6e6"/><rect x="2217.500" y="613" width="60.500" height="60" fill="#000"/><rect x="2278" y="613" width="1.500" height="60" fill="#e6e6e6"/>
<g font-family="Liberation Serif,serif" font-size="62" text-anchor="middle">
<text x="2125" y="665" fill="#8040d0" stroke="#154866" stroke-width=".8">1</text>
<text x="2186" y="665" fill="#f000f0" stroke="#fff" stroke-width="1.2" paint-order="stroke">2</text>
<text x="2247" y="665" fill="#f000f0" stroke="#000" stroke-width=".8">3</text></g>
<path d="M2090.500 657V675" stroke="#dcdcdc" stroke-dasharray="1.5 1.5"/>
</svg>
</body></html>
